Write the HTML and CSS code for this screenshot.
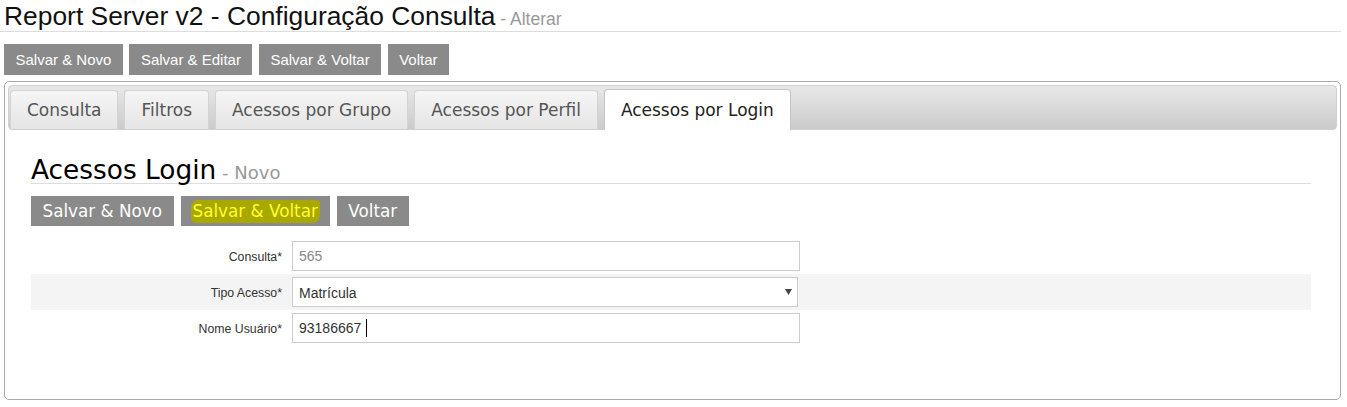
FILE: index.html
```html
<!DOCTYPE html>
<html lang="pt-BR">
<head>
<meta charset="utf-8">
<title>Report Server v2 - Configuração Consulta</title>
<link rel="stylesheet" href="styles.css">
</head>
<body>
<div class="page">
  <h1 class="page-title">Report Server v2 - Configuração Consulta<small class="page-sub"> - Alterar</small></h1>
  <div class="toolbar">
    <button class="btn">Salvar &amp; Novo</button>
    <button class="btn">Salvar &amp; Editar</button>
    <button class="btn">Salvar &amp; Voltar</button>
    <button class="btn">Voltar</button>
  </div>

  <div class="panel">
    <ul class="tabs">
      <li class="tab">Consulta</li>
      <li class="tab">Filtros</li>
      <li class="tab">Acessos por Grupo</li>
      <li class="tab">Acessos por Perfil</li>
      <li class="tab active">Acessos por Login</li>
    </ul>
    <div class="tab-body">
      <h2 class="section-title">Acessos Login<small class="section-sub"> - Novo</small></h2>
      <div class="toolbar toolbar-lg">
        <button class="btn btn-lg">Salvar &amp; Novo</button>
        <button class="btn btn-lg"><span class="mark">Salvar &amp; Voltar</span></button>
        <button class="btn btn-lg">Voltar</button>
      </div>
      <div class="form">
        <div class="row">
          <label class="label">Consulta*</label>
          <div class="field readonly">565</div>
        </div>
        <div class="row alt">
          <label class="label">Tipo Acesso*</label>
          <div class="field select">
            <span>Matrícula</span>
            <svg class="arrow" width="7" height="6" viewBox="0 0 7 6"><path d="M0 0 H7 L3.5 6 Z" fill="#444"/></svg>
          </div>
        </div>
        <div class="row">
          <label class="label">Nome Usuário*</label>
          <div class="field">93186667<span class="caret"></span></div>
        </div>
      </div>
    </div>
  </div>
</div>
</body>
</html>
```

FILE: styles.css
```css
* { box-sizing: border-box; }

html, body {
  margin: 0;
  padding: 0;
  background: #fff;
}

.page {
  padding: 0 6px 0 4px;
  font-family: "Liberation Sans", Arial, sans-serif;
  color: #000;
}

.page-title {
  margin: 0 0 0 -4px;
  padding: 2px 0 0 4px;
  font-family: "Liberation Sans", Arial, sans-serif;
  font-weight: normal;
  font-size: 26.4px;
  line-height: 29px;
  height: 32px;
  border-bottom: 1px solid #dddddd;
  color: #111;
  white-space: nowrap;
}

.page-sub {
  font-size: 17.5px;
  color: #999;
}

.toolbar {
  display: flex;
  gap: 6.5px;
  margin-top: 12px;
}

.btn {
  height: 31px;
  padding: 0 11.5px;
  border: 0;
  border-radius: 0;
  background: #8a8a8a;
  color: #fff;
  font-family: "Liberation Sans", Arial, sans-serif;
  font-size: 15px;
  line-height: 31px;
  white-space: nowrap;
  cursor: pointer;
}

.panel {
  margin-top: 6px;
  border: 1px solid #aaaaaa;
  border-radius: 5px;
  padding: 3px;
  font-family: "DejaVu Sans", Verdana, sans-serif;
}

.tabs {
  list-style: none;
  margin: 0;
  padding: 5px 2px 0 1px;
  height: 45px;
  display: flex;
  align-items: flex-end;
  gap: 6px;
  border: 1px solid #d0d0d0;
  border-radius: 4px;
  background: linear-gradient(#e8e8e8, #cbcbcb);
}

.tab {
  height: 39px;
  padding: 0 16px 1px;
  display: flex;
  align-items: center;
  border: 1px solid #d3d3d3;
  border-bottom: 0;
  border-radius: 4px 4px 0 0;
  background: linear-gradient(#f5f5f5, #e5e5e5);
  color: #555;
  font-size: 17px;
  white-space: nowrap;
}

.tab.active {
  height: 41px;
  margin-bottom: -1px;
  padding-top: 1px;
  background: #fff;
  border-color: #c5c5c5;
  color: #222;
}

.tab-body {
  padding: 27px 26px 50px 23px;
}

.section-title {
  margin: 0;
  font-family: "DejaVu Sans", Verdana, sans-serif;
  font-weight: normal;
  font-size: 26.4px;
  line-height: 26px;
  height: 27px;
  border-bottom: 1px solid #dddddd;
  color: #000;
  white-space: nowrap;
}

.section-sub {
  font-size: 18px;
  color: #999;
}

.toolbar-lg {
  gap: 7px;
}

.btn-lg {
  height: 30px;
  line-height: 30px;
  padding: 0 11.5px;
  font-family: "DejaVu Sans", Verdana, sans-serif;
  font-size: 16.8px;
}

.mark {
  display: inline-block;
  line-height: 23px;
  padding: 0 2px;
  margin: 0 -1.5px;
  background: #a8a800;
  border-radius: 7px 4px 8px 5px;
  color: #ffff2a;
}

.form {
  margin-top: 12px;
}

.row {
  display: grid;
  grid-template-columns: 251px auto;
  column-gap: 10px;
  align-items: center;
  padding: 3px 0;
  height: 36px;
}

.row.alt {
  background: #f4f4f4;
}

.label {
  text-align: right;
  font-family: "Liberation Sans", Arial, sans-serif;
  font-size: 12.3px;
  color: #333;
  padding-top: 2px;
}

.field {
  width: 508px;
  height: 30px;
  border: 1px solid #cccccc;
  background: #fff;
  padding: 0 6px;
  display: flex;
  align-items: center;
  font-family: "Liberation Sans", Arial, sans-serif;
  font-size: 14px;
  color: #333;
}

.field.readonly {
  color: #888;
}

.field.select {
  width: 506px;
  justify-content: space-between;
  padding-right: 5px;
}

.field.select span {
  padding-top: 2px;
}

.arrow {
  display: block;
}

.caret {
  display: inline-block;
  width: 1px;
  height: 18px;
  background: #000;
  margin-left: 5px;
}
```
